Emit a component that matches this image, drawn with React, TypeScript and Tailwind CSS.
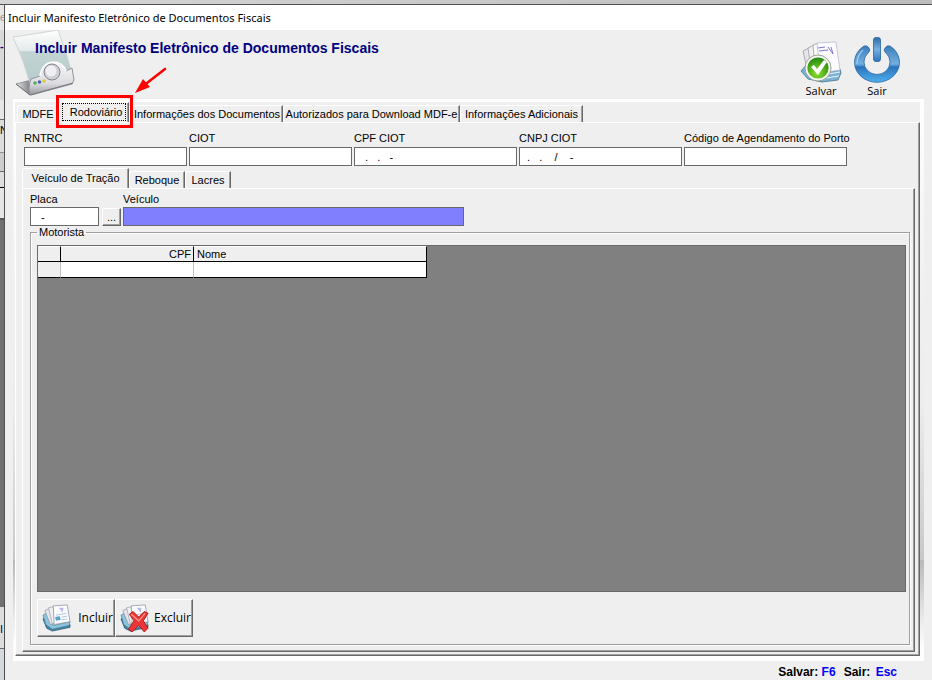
import type { ReactNode } from "react";

const edge = "border-[#696969]";
const panel =
  "border-t border-l border-t-white border-l-white border-r border-b border-r-[#696969] border-b-[#696969] shadow-[inset_-1px_-1px_0_#a0a0a0]";
const raised = panel;

function ScannerArt() {
  return (
    <svg className="absolute top-0 left-2 h-[68px] w-[62px]" viewBox="0 0 62 68" aria-hidden="true">
      <defs>
        <linearGradient id="glass" x1="0" y1="0" x2="0" y2="1">
          <stop offset="0" stopColor="#ffffff" />
          <stop offset="0.36" stopColor="#e4eaea" />
          <stop offset="0.38" stopColor="#c3d3d3" />
          <stop offset="1" stopColor="#b4cccc" />
        </linearGradient>
        <linearGradient id="steel" x1="0" y1="0" x2="0" y2="1">
          <stop offset="0" stopColor="#f8f8fa" />
          <stop offset="0.65" stopColor="#dcdce0" />
          <stop offset="1" stopColor="#96979d" />
        </linearGradient>
        <linearGradient id="wedge" x1="0" y1="0" x2="1" y2="0">
          <stop offset="0" stopColor="#e6e6e8" />
          <stop offset="1" stopColor="#77797f" />
        </linearGradient>
      </defs>
      <path d="M3 54 L18 50 L17 65 Z" fill="url(#wedge)" stroke="#85878d" strokeWidth="0.8" />
      <path d="M0 7 Q22 4 45 0 Q54 24 60 47 L18 57 Q11 30 0 7 Z" fill="url(#glass)" stroke="#c9cdcd" strokeWidth="0.8" />
      <path
        d="M18 49 L27 46 Q29 33 40 32 Q50 32 53 41 L59 38 L61 50 L59 54 L18 65 Q14 60 18 49 Z"
        fill="url(#steel)"
        stroke="#93959b"
        strokeWidth="1"
      />
      <path d="M27 46 Q29 33 40 32 Q50 32 53 41" fill="none" stroke="#ffffff" strokeWidth="1.6" />
      <circle cx="39" cy="42" r="8" fill="#cfd0d5" stroke="#85878e" strokeWidth="1" />
      <circle cx="38" cy="41" r="5.5" fill="#f0f0f3" />
      <circle cx="22" cy="53" r="1.8" fill="#4cb05a" />
      <circle cx="26.5" cy="52" r="1.8" fill="#5158b8" />
      <circle cx="31" cy="51" r="1.8" fill="#d9cf2c" />
      <path d="M3 54 L17 65 L60 53" fill="none" stroke="#75777d" strokeWidth="1" />
    </svg>
  );
}

function PapersArt() {
  return (
    <g>
      <path d="M1 16 L4 14 L12 25 L30 22 L30 25 L11 29 L5 26 Z" fill="#3f86a8" stroke="#24485f" strokeWidth="0.7" />
      <path d="M1 12 L6 9 L12 23 L30 19 L29 23 L11 27 L4 22 Z" fill="#8dc3dc" stroke="#457c98" strokeWidth="0.7" />
      <path d="M3 7 L8 5 L13 21 L9 22 Z" fill="#e6e6ea" stroke="#8e8f9a" strokeWidth="0.7" />
      <path d="M7 4 L12 3 L14 21 L11 21 Z" fill="#f0f0f4" stroke="#9a9aa6" strokeWidth="0.7" />
      <path d="M12 2 L27 1 L30 19 L13 22 Z" fill="#fbfcff" stroke="#8a91a0" strokeWidth="0.8" />
      <path d="M18 4 L22 9 L23 4 Z" fill="#b9b4ee" />
      <path d="M15 12 L26 10 M21 14 L27 13 M21 17 L27 16" stroke="#a8c4da" strokeWidth="1" />
      <path d="M14 14 L19 13 L20 17 L15 18 Z" fill="#55a1cc" />
    </g>
  );
}

function IncludeArt() {
  return (
    <svg className="h-7 w-[29px] shrink-0" viewBox="0 0 31 30" aria-hidden="true">
      <PapersArt />
    </svg>
  );
}

function ExcludeArt() {
  return (
    <svg className="h-7 w-[29px] shrink-0" viewBox="0 0 31 30" aria-hidden="true">
      <PapersArt />
      <path
        d="M10 11 L14 8 L20 14 L26 8 L30 10 L25 18 L30 26 L26 30 L20 23 L13 30 L9 27 L15 18 Z"
        fill="#ec3636"
        stroke="#a51212"
        strokeWidth="0.9"
      />
      <path d="M12 11 L20 18 L27 10" fill="none" stroke="#ff9a92" strokeWidth="1.3" />
    </svg>
  );
}

function SaveArt() {
  return (
    <svg className="h-[42px] w-[42px]" viewBox="0 0 42 42" aria-hidden="true">
      <defs>
        <radialGradient id="green" cx="0.45" cy="0.75" r="0.7">
          <stop offset="0" stopColor="#8fe02c" />
          <stop offset="1" stopColor="#288c12" />
        </radialGradient>
      </defs>
      <path d="M1 30 L8 22 L20 34 L40 28 L41 32 L38 39 L22 41 L8 38 Z" fill="#7fb2d2" stroke="#3d7195" strokeWidth="0.8" />
      <path d="M28 33 L40 31 M26 37 L39 35" stroke="#e3f2fb" strokeWidth="1.2" />
      <path d="M3 10 L9 7 L14 27 L7 28 Z" fill="#e6e6ea" stroke="#9b9ba5" strokeWidth="0.8" />
      <path d="M8 7 L14 4 L18 26 L11 27 Z" fill="#f1f1f5" stroke="#9b9ba5" strokeWidth="0.8" />
      <path d="M13 4 L18 2 L22 26 L15 27 Z" fill="#fafafd" stroke="#9b9ba5" strokeWidth="0.8" />
      <path d="M17 2 L36 1 L40 29 L20 32 Z" fill="#fcfcff" stroke="#b8bccb" strokeWidth="0.8" />
      <path d="M18 7 L25 6 M19 10 L28 9 M28 6 L33 13 L31 6" fill="none" stroke="#7a77d8" strokeWidth="1" />
      <circle cx="18" cy="27" r="13" fill="#f6f8f4" stroke="#98a494" strokeWidth="1" />
      <circle cx="18" cy="27" r="10.6" fill="url(#green)" />
      <path d="M11 26 L14 24 L17 28 L24 19 L27 21 L18 34 Z" fill="#ffffff" />
    </svg>
  );
}

function PowerArt() {
  return (
    <svg className="h-[46px] w-[46px]" viewBox="0 0 46 46" aria-hidden="true">
      <defs>
        <linearGradient id="blue" x1="0" y1="0" x2="0" y2="1">
          <stop offset="0" stopColor="#3c7db9" />
          <stop offset="0.5" stopColor="#74b0e0" />
          <stop offset="0.58" stopColor="#2b73bb" />
          <stop offset="1" stopColor="#4fb0ee" />
        </linearGradient>
        <linearGradient id="blueBar" x1="0" y1="0" x2="0" y2="1">
          <stop offset="0" stopColor="#2f6ca8" />
          <stop offset="0.5" stopColor="#74b0e0" />
          <stop offset="1" stopColor="#2b73bb" />
        </linearGradient>
      </defs>
      <path
        d="M10 9 Q13 8 15 11 Q17 14 14 16 A13 12.5 0 1 0 32 16 Q29 14 31 11 Q33 8 36 9 A22.5 20 0 1 1 10 9 Z"
        fill="url(#blue)"
        stroke="#2764a2"
        strokeWidth="0.8"
      />
      <rect x="19.5" y="0.5" width="7" height="24" rx="2.5" fill="url(#blueBar)" stroke="#2764a2" strokeWidth="0.8" />
      <path d="M3 27 Q3 18 9 13" fill="none" stroke="#9bd0f4" strokeWidth="1.2" />
    </svg>
  );
}

function BackgroundWindow() {
  return (
    <div
      aria-hidden="true"
      className="flex w-[5px] shrink-0 flex-col overflow-hidden border-r border-[#505050] bg-[#dcdcdc] font-['Liberation_Sans',sans-serif] text-[11px] leading-3"
    >
      <div className="h-[25px] bg-[#e6e6e6] pt-1.5 text-[#999999]">e</div>
      <div className="h-[70px] bg-[#d9d9d9] pt-2.5 font-bold text-[#000080]">-</div>
      <div className="h-5 border-b border-[#696969] bg-[#e6e6e6]" />
      <div className="h-[33px] border-b border-[#909090] bg-[#dcdcdc] pt-1 text-black">N</div>
      <div className="h-[19px] border-b border-[#696969] bg-[#cccccc]" />
      <div className="h-4 border-b border-black bg-[#dddddd]" />
      <div className="h-8 border-b-2 border-[#555555] bg-[#e5e5e5]" />
      <div className="flex-1 bg-[#707070]" />
      <div className="h-[42px] border-b border-[#696969] bg-[#dcdcdc] pt-4 text-[#000080]">I</div>
      <div className="h-[31px] bg-[#d5d8dc]" />
    </div>
  );
}

function Tab({ width, active, children }: { width: string; active?: boolean; children: ReactNode }) {
  return (
    <button
      type="button"
      role="tab"
      aria-selected={!!active}
      className={`${width} ${
        active ? "h-5 pb-0.5" : "h-[17px]"
      } relative rounded-tl-[3px] border-t border-r border-l border-t-white border-r-[#696969] border-l-white whitespace-nowrap shadow-[inset_-1px_0_0_#a0a0a0]`}
    >
      {children}
    </button>
  );
}

function Field({ label, id, value = "" }: { label: string; id: string; value?: string }) {
  return (
    <div className="w-[163px]">
      <label htmlFor={id} className="mb-px block h-4 whitespace-nowrap">
        {label}
      </label>
      <input id={id} defaultValue={value} className={`block h-[19px] w-full border ${edge} bg-white px-1 whitespace-pre`} />
    </div>
  );
}

export default function App() {
  return (
    <div className="flex h-screen min-h-[480px] flex-col overflow-hidden bg-[#efefef] font-['Liberation_Sans',Arial,sans-serif] text-[11px] leading-4 text-black">
      <div className="h-[5px] shrink-0 border-b border-[#505050] bg-gradient-to-r from-[#d5d5d5] to-[#bcbcbc]" />
      <div className="flex min-h-0 flex-1">
        <BackgroundWindow />
        <div className="flex min-w-0 flex-1 flex-col">
          <div className="flex h-[25px] shrink-0 items-center bg-white pl-[3px] font-['Noto_Sans',sans-serif] text-[11px]">
            Incluir Manifesto Eletrônico de Documentos Fiscais
          </div>

          <header className="relative flex h-[69px] shrink-0 justify-between">
            <ScannerArt />
            <h1 className="relative pt-2.5 pl-[30px] text-[14px] font-bold whitespace-nowrap text-[#000080]">
              Incluir Manifesto Eletrônico de Documentos Fiscais
            </h1>
            <div className="flex items-end gap-3 pr-8 font-['Open_Sans',sans-serif] text-[11px]">
              <button type="button" className="flex w-[42px] flex-col items-center">
                <SaveArt />
                <span>Salvar</span>
              </button>
              <button type="button" className="flex w-[46px] flex-col items-center">
                <PowerArt />
                <span>Sair</span>
              </button>
            </div>
          </header>

          <main className="mx-2 flex min-h-0 flex-1 flex-col bg-[linear-gradient(to_bottom,#fff_0%,#f0f0f0_35%,#ececec_55%,#c8c8c8_82%,#b9b9b9_82%,#f0f0f0_94%,#fff_98%)]">
            <div className="h-[3px] shrink-0 bg-white" />
            <div className="mr-1 ml-0.5 flex min-h-0 flex-1 flex-col bg-[#efefef]">
              <div role="tablist" className="flex h-5 shrink-0 items-end pl-0.5">
                <Tab width="w-[42px]">MDFE</Tab>
                <Tab width="w-[70px]" active>
                  <span className="mx-0.5 block border border-dotted border-black pl-1">Rodoviário</span>
                  <span className="pointer-events-none absolute -top-2 -left-1 z-10 h-[33px] w-[77px] border-3 border-[#fe0000]" />
                  <svg className="pointer-events-none absolute -top-9 left-[75px] h-7 w-9" viewBox="0 0 36 28" aria-hidden="true">
                    <path d="M30 2 L12 16" stroke="#fe0000" strokeWidth="2.6" strokeLinecap="round" />
                    <path d="M0 26 L8 12 L15 20 Z" fill="#fe0000" />
                  </svg>
                </Tab>
                <Tab width="w-[154px]">
                  <span className="pl-0.5">Informações dos Documentos</span>
                </Tab>
                <Tab width="w-[177px]">Autorizados para Download MDF-e</Tab>
                <Tab width="w-[123px]">Informações Adicionais</Tab>
              </div>

              <section className={`flex min-h-0 flex-1 flex-col ${panel} pr-1 pb-[3px] pl-1.5`}>
                <div className="flex shrink-0 gap-0.5 pt-[7px] pl-0.5">
                  <Field label="RNTRC" id="rntrc" />
                  <Field label="CIOT" id="ciot" />
                  <Field label="CPF CIOT" id="cpf" value="  .   .   -" />
                  <Field label="CNPJ CIOT" id="cnpj" value=" .   .    /    -" />
                  <Field label="Código de Agendamento do Porto" id="porto" />
                </div>

                <div role="tablist" className="mt-0.5 flex h-5 shrink-0 items-end">
                  <Tab width="w-[107px]" active>
                    Veículo de Tração
                  </Tab>
                  <Tab width="w-14">Reboque</Tab>
                  <Tab width="w-[46px]">Lacres</Tab>
                </div>

                <div className={`flex min-h-0 flex-1 flex-col ${panel} pt-0.5 pr-1 pb-1.5 pl-[7px]`}>
                  <div className="flex shrink-0 items-end">
                    <div className="w-[69px]">
                      <label htmlFor="placa" className="block h-4">
                        Placa
                      </label>
                      <input id="placa" defaultValue="  -" className={`block h-[19px] w-full border ${edge} bg-white px-1`} />
                    </div>
                    <button type="button" aria-label="Procurar veículo" className={`ml-[3px] h-[18px] w-[19px] ${raised}`}>
                      ...
                    </button>
                    <div className="ml-0.5 w-[341px]">
                      <label htmlFor="veiculo" className="block h-4">
                        Veículo
                      </label>
                      <input id="veiculo" readOnly className={`block h-[19px] w-full border ${edge} bg-[#8080ff] px-1`} />
                    </div>
                  </div>

                  <fieldset className="flex min-h-0 min-w-0 flex-1 flex-col border border-[#a0a0a0] pr-[3px] pb-[7px] pl-1.5 shadow-[inset_1px_1px_0_#fff,1px_1px_0_#fff]">
                    <legend className="h-3 px-0.5 leading-3">Motorista</legend>
                    <div className={`mt-[7px] min-h-0 flex-1 border ${edge} bg-[#808080]`}>
                      <table className="w-[389px] table-fixed border-separate border-spacing-0">
                        <thead className="bg-[#efefef]">
                          <tr className="h-4">
                            <th className="h-4 w-[23px] border-t border-r border-b border-t-white border-r-black border-b-black p-0" />
                            <th className="h-4 w-[133px] border-t border-r border-b border-t-white border-r-black border-b-black p-0 pr-0.5 text-right leading-[14px] font-normal">
                              CPF
                            </th>
                            <th className="h-4 border-t border-r border-b border-t-white border-r-black border-b-black p-0 pl-[3px] text-left leading-[14px] font-normal">
                              Nome
                            </th>
                          </tr>
                        </thead>
                        <tbody className="bg-white">
                          <tr className="h-4">
                            <td className="h-4 border-r border-b border-r-[#c0c0c0] border-b-black bg-[#efefef] p-0" />
                            <td className="h-4 border-r border-b border-r-[#c0c0c0] border-b-black p-0" />
                            <td className="h-4 border-r border-b border-black p-0" />
                          </tr>
                        </tbody>
                      </table>
                    </div>
                    <div className="mt-[7px] flex shrink-0 font-['Open_Sans',sans-serif] text-[12px]">
                      <button type="button" className={`flex h-[38px] w-[78px] items-center justify-between pr-px pl-1 ${raised}`}>
                        <IncludeArt />
                        Incluir
                      </button>
                      <button type="button" className={`flex h-[38px] w-[78px] items-center justify-between pr-px pl-1 ${raised}`}>
                        <ExcludeArt />
                        Excluir
                      </button>
                    </div>
                  </fieldset>
                </div>
              </section>
            </div>
            <div className="h-[5px] shrink-0 bg-white" />
          </main>

          <footer className="flex h-[19px] shrink-0 items-end justify-end gap-2 pr-[35px] text-[12px] font-bold">
            <span>
              Salvar: <span className="text-[#0000ff]">F6</span>
            </span>
            <span>
              Sair: <span className="pl-0.5 text-[#0000ff]">Esc</span>
            </span>
          </footer>
        </div>
      </div>
    </div>
  );
}
